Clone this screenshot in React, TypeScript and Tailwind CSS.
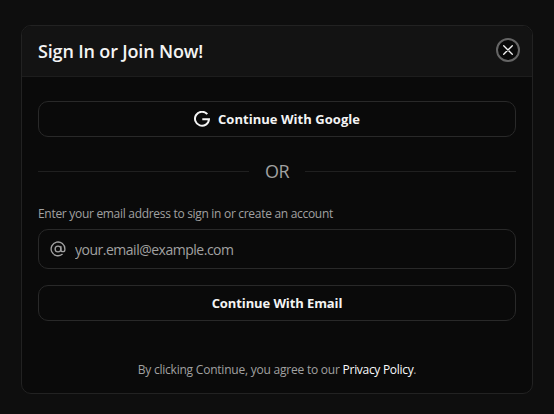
function GoogleMark() {
  return (
    <svg viewBox="0 0 16 16" className="size-4 shrink-0 fill-none stroke-[#f4f4f4]" strokeWidth="2">
      <path d="M13.3 3.2A7 7 0 1 0 15 8.2H8.3" />
    </svg>
  );
}

function AtMark() {
  return (
    <svg viewBox="0 0 24 24" className="mb-px size-4 shrink-0 fill-none stroke-[#a1a1a1]" strokeWidth="2" strokeLinecap="round">
      <circle cx="12" cy="12" r="4.3" />
      <path d="M16.3 8v5a3 3 0 0 0 6 0v-1a10.3 10.3 0 1 0-4 8" />
    </svg>
  );
}

const actionButton =
  "flex h-9 w-full items-center justify-center gap-2 whitespace-nowrap rounded-[10px] border border-[#292929] text-[13px] font-bold text-[#f4f4f4]";

export default function App() {
  return (
    <main className="h-[414px] w-[554px] overflow-hidden bg-[#0e0e0e] pl-[21px] pt-[25px] font-['Open_Sans','Noto_Sans',sans-serif]">
      <section className="flex h-[369px] w-[512px] flex-col overflow-hidden rounded-[10px] border border-[#222222] bg-[#0a0a0a]">
        <header className="flex h-[51px] shrink-0 items-center justify-between border-b border-[#1d1d1d] bg-[#131313] pl-4 pr-3">
          <h1 className="whitespace-nowrap text-[18px] font-semibold leading-6 tracking-[-0.16px] text-[#f4f4f4]">
            Sign In or Join Now!
          </h1>
          <button
            aria-label="Close"
            className="mb-[3px] flex size-6 items-center justify-center rounded-full border-2 border-[#656565] bg-[#0a0a0a]"
          >
            <svg viewBox="0 0 10 10" className="size-[10px] stroke-[#f4f4f4]" strokeWidth="1.3" strokeLinecap="round">
              <path d="M.7.7 9.3 9.3M9.3.7.7 9.3" />
            </svg>
          </button>
        </header>

        <div className="flex flex-col px-4 pt-6">
          <button className={actionButton}>
            <GoogleMark />
            <span className="w-[142px] pt-px text-left tracking-[0.04px]">Continue With Google</span>
          </button>

          <div className="mt-5 flex h-7 items-center gap-4">
            <div className="h-px flex-1 bg-[#202020]" />
            <span className="w-6 whitespace-nowrap text-[18px] leading-7 tracking-[-0.5px] text-[#a1a1a1]">OR</span>
            <div className="h-px flex-1 bg-[#202020]" />
          </div>

          <label htmlFor="email" className="mt-[21px] whitespace-nowrap text-[12px] leading-4 tracking-[-0.3px] text-[#a1a1a1]">
            Enter your email address to sign in or create an account
          </label>
          <div className="mt-[7px] flex h-10 items-center rounded-[10px] border border-[#292929] pl-[11px]">
            <AtMark />
            <input
              id="email"
              type="email"
              placeholder="your.email@example.com"
              className="ml-[9px] min-w-0 flex-1 bg-transparent pt-0.5 text-[14px] leading-5 tracking-[-0.49px] outline-none placeholder:text-[#a1a1a1]"
            />
          </div>

          <button className={actionButton + " mt-4"}>
            <span className="pt-px tracking-[-0.1px]">Continue With Email</span>
          </button>

          <p className="mt-[41px] whitespace-nowrap text-center text-[12px] leading-4 tracking-[-0.22px] text-[#a1a1a1]">
            By clicking Continue, you agree to our{" "}
            <a className="font-medium tracking-[-0.3px] text-[#fafafa]">Privacy Policy</a>.
          </p>
        </div>
      </section>
    </main>
  );
}
